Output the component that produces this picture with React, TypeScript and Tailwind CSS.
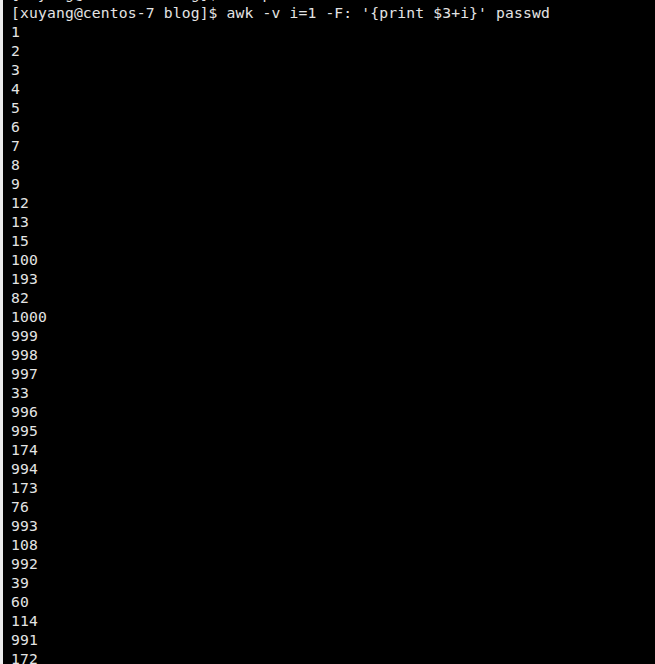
import React from 'react';

const prompt = "[xuyang@centos-7 blog]$ awk -v i=1 -F: '{print $3+i}' passwd";

const output = [
  '1', '2', '3', '4', '5', '6', '7', '8', '9', '12', '13', '15', '100', '193', '82', '1000',
  '999', '998', '997', '33', '996', '995', '174', '994', '173', '76', '993', '108', '992',
  '39', '60', '114', '991', '172',
];

const App = () => {
  return (
    <div className="flex h-[664px] w-[655px] overflow-hidden bg-black">
      {/* window edge on the left */}
      <div className="w-[3px] shrink-0 bg-[#ececec]" />
      <div
        className="flex-1 pl-[8px] text-[14.7px] leading-[19px] tracking-[0.14px] text-[#e4e4e4] whitespace-pre -mt-[16px]"
        style={{ fontFamily: '"DejaVu Sans Mono", monospace' }}
      >
        {/* previous line, cut off at the top */}
        <div>[xuyang@centos-7 blog]$ cat passwd</div>
        <div>{prompt}</div>
        {output.map((n, i) => (
          <div key={i}>{n}</div>
        ))}
      </div>
    </div>
  );
};

export default App;
